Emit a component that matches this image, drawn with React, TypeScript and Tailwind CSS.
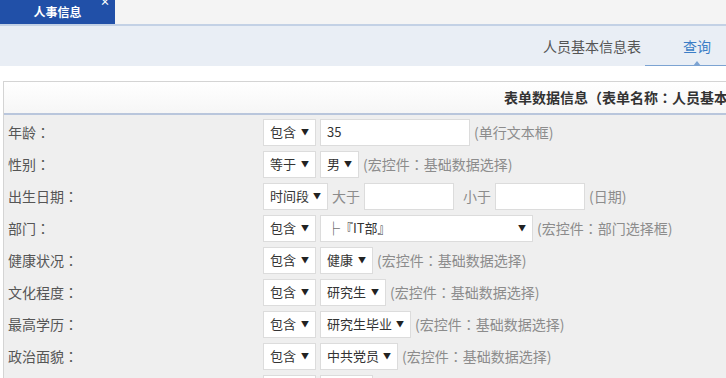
import React from 'react'

const font = { fontFamily: '"Microsoft YaHei", "Noto Sans CJK SC", "Liberation Sans", sans-serif' }

// fullwidth colon drawn centred, as in the original font
function C() {
  return <span style={{ fontFamily: '"Noto Sans CJK JP", sans-serif' }}>：</span>
}

function Sel({ text, w }: { text: string; w: number }) {
  return (
    <div
      className="h-[27px] bg-white border border-[#dcdcdc] flex items-center justify-between pl-[6px] pr-[6px] text-[13px] text-[#333] shrink-0"
      style={{ width: w }}
    >
      <span className="whitespace-nowrap">{text}</span>
      <span className="text-[8px] text-[#222]">▼</span>
    </div>
  )
}

function Input({ value = '', w }: { value?: string; w: number }) {
  return (
    <div
      className="h-[27px] bg-white border border-[#dcdcdc] flex items-center px-[6px] text-[13px] text-[#333] shrink-0"
      style={{ width: w }}
    >
      {value}
    </div>
  )
}

function Hint({ children }: { children: React.ReactNode }) {
  return <span className="text-[14px] text-[#8c8c8c] whitespace-nowrap">{children}</span>
}

function Row({ label, children }: { label?: string; children: React.ReactNode }) {
  return (
    <div className="flex items-center h-[32px]">
      <div className="w-[259px] pl-[4px] text-[14px] text-[#555] shrink-0 whitespace-nowrap">
        {label && (
          <>
            {label}
            <C />
          </>
        )}
      </div>
      <div className="flex items-center gap-[4px]">{children}</div>
    </div>
  )
}

export default function App() {
  return (
    <div className="w-[726px] h-[378px] overflow-hidden bg-white relative" style={font}>
      {/* tab strip */}
      <div className="h-[24px] bg-[#f4f4f4] flex">
        <div className="w-[115px] h-[24px] bg-[#2150a8] relative flex items-center justify-center">
          <span className="text-white text-[12px] font-bold">人事信息</span>
          <span className="absolute right-[5px] top-[-3px] text-white text-[10px] leading-none font-bold">×</span>
        </div>
      </div>
      <div className="h-[2px] bg-[#c3d1e5]" />

      {/* nav */}
      <div className="h-[40px] bg-[#e9eef5] flex items-center justify-end">
        <span className="text-[14px] text-[#555] mr-[4px]">人员基本信息表</span>
        <div className="relative w-[81px] h-[40px] flex items-center pl-[38px]">
          <span className="text-[14px] text-[#3b7dc6]">查询</span>
          <div className="absolute left-0 right-0 bottom-0 h-[1px] bg-[#7ca3d2]" />
          <div className="absolute left-[48px] bottom-0 w-0 h-0 border-l-[4px] border-r-[4px] border-b-[5px] border-l-transparent border-r-transparent border-b-[#7ca3d2]" />
        </div>
      </div>

      {/* table */}
      <div className="ml-[3px] mt-[15px] border-l border-t border-[#d4d4d4]">
        <div className="h-[33px] bg-gradient-to-b from-white to-[#f6f6f6] flex items-center pl-[500px] whitespace-nowrap border-b-2 border-[#b9c6dc]">
          <span className="text-[14px] font-bold text-[#333]">
            表单数据信息（表单名称<C />人员基本信息表）
          </span>
        </div>
        <div className="bg-[#efefef] pt-[1px]">
          <Row label="年龄">
            <Sel text="包含" w={53} />
            <Input value="35" w={150} />
            <Hint>(单行文本框)</Hint>
          </Row>
          <Row label="性别">
            <Sel text="等于" w={53} />
            <Sel text="男" w={39} />
            <Hint>(宏控件<C />基础数据选择)</Hint>
          </Row>
          <Row label="出生日期">
            <Sel text="时间段" w={65} />
            <Hint>大于</Hint>
            <Input w={90} />
            <span className="w-[1px]" />
            <Hint>小于</Hint>
            <Input w={90} />
            <Hint>(日期)</Hint>
          </Row>
          <Row label="部门">
            <Sel text="包含" w={53} />
            <Sel text="├『IT部』" w={213} />
            <Hint>(宏控件<C />部门选择框)</Hint>
          </Row>
          <Row label="健康状况">
            <Sel text="包含" w={53} />
            <Sel text="健康" w={53} />
            <Hint>(宏控件<C />基础数据选择)</Hint>
          </Row>
          <Row label="文化程度">
            <Sel text="包含" w={53} />
            <Sel text="研究生" w={66} />
            <Hint>(宏控件<C />基础数据选择)</Hint>
          </Row>
          <Row label="最高学历">
            <Sel text="包含" w={53} />
            <Sel text="研究生毕业" w={91} />
            <Hint>(宏控件<C />基础数据选择)</Hint>
          </Row>
          <Row label="政治面貌">
            <Sel text="包含" w={53} />
            <Sel text="中共党员" w={78} />
            <Hint>(宏控件<C />基础数据选择)</Hint>
          </Row>
          <Row>
            <Sel text="" w={53} />
            <Sel text="" w={53} />
          </Row>
        </div>
      </div>
    </div>
  )
}
